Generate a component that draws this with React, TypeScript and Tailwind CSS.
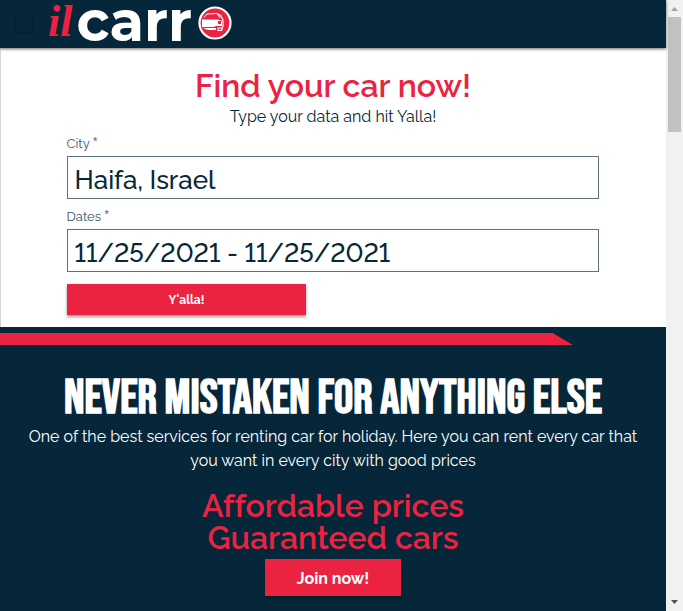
import type { ReactNode } from "react";

function Logo() {
  return (
    <a href="#home" aria-label="ilcarro" className="flex h-12 items-center pb-[2px] text-white">
      <span className="pb-[2px] font-['Liberation_Serif',serif] text-[44px] leading-[40px] font-bold text-[#eb2340] italic">il</span>
      <span className="pb-1 pl-1 font-['Montserrat','DejaVu_Sans',sans-serif] text-[56px] leading-[36px] font-bold">carr</span>
      <svg viewBox="0 0 34 34" className="ml-[6px] size-[34px]" aria-hidden="true">
        <circle cx="17" cy="17" r="15.5" fill="#eb2340" stroke="#fff" strokeWidth="2.2" />
        <path d="M6 11.500 9 8 19 7.500 22 12" fill="none" stroke="#fff" strokeWidth="1" />
        <path d="M4 13.500H20L24 15V20H18L16 21H4Z" fill="#fff" />
        <path d="M5 22H18V24H10Z" fill="#fff" />
        <path d="M19 7.500 22.500 9.500 25 14V20L23.500 24.500H20V22H24" fill="none" stroke="#fff" strokeWidth="1.2" />
        <path d="M20 15V18H23V15Z" fill="#eb2340" />
      </svg>
    </a>
  );
}

function Field({ id, label, value }: { id: string; label: string; value: string }) {
  return (
    <div>
      <label htmlFor={id} className="block h-7 pt-2 text-[13px] leading-4 text-[#3d5566]">
        {label} <sup className="font-['Open_Sans',sans-serif] text-[9px]">*</sup>
      </label>
      <input
        id={id}
        type="text"
        required
        defaultValue={value}
        className="block h-[43px] w-full border border-[#5f717d] bg-white px-[7px] pt-1 text-[26px] leading-8 font-medium text-[#062739] lining-nums outline-none"
      />
    </div>
  );
}

function ActionButton({ children, className }: { children: ReactNode; className: string }) {
  return (
    <button type="button" className={"bg-[#eb2340] text-white shadow-[0_2px_3px_rgba(0,0,0,0.4)] " + className}>
      {children}
    </button>
  );
}

export default function App() {
  return (
    <div className="flex h-screen overflow-hidden bg-white font-[Raleway,Lato,sans-serif] text-[#062739]">
      <div className="flex min-w-0 flex-1 flex-col">
        <header className="relative flex h-12 shrink-0 items-center gap-4 bg-[#062739] px-4 shadow-[0_1px_3px_rgba(0,0,0,0.6)]">
          <button type="button" aria-label="Menu" className="size-4 shadow-[0_1px_2px_rgba(0,0,0,0.35)]" />
          <Logo />
        </header>
        <main className="flex flex-1 flex-col">
          <section className="shrink-0 pt-5 pb-3 shadow-[inset_1px_0_#d5d5d5]">
            <h1 className="text-center text-[32px] leading-9 font-semibold text-[#eb2340]">Find your car now!</h1>
            <p className="pt-px text-center text-base leading-6">Type your data and hit Yalla!</p>
            <form className="mx-auto -mt-px w-4/5">
              <Field id="city" label="City" value="Haifa, Israel" />
              <div className="h-[2px]" />
              <Field id="dates" label="Dates" value="11/25/2021 - 11/25/2021" />
              <ActionButton className="mt-3 block h-[31px] w-[45%] pt-px text-[12px] font-bold">Y'alla!</ActionButton>
            </form>
          </section>
          <section className="flex flex-1 flex-col bg-[#062739] pt-[6px] text-center text-white">
            <div className="h-3 w-[86%] shrink-0 bg-[#eb2340] [clip-path:polygon(0_0,calc(100%-20px)_0,100%_100%,0_100%)]" />
            <h2 className="mt-7 font-['Bebas_Neue','Roboto_Condensed','Roboto',sans-serif] text-[48px] leading-[52px] font-bold whitespace-nowrap">
              NEVER MISTAKEN FOR ANYTHING ELSE
            </h2>
            <p className="px-6 text-base leading-6">
              One of the best services for renting car for holiday. Here you can rent every car that you want in every city with good prices
            </p>
            <p className="mt-4 pt-px text-[32px] leading-8 font-semibold text-[#eb2340] [font-variant-ligatures:none]">
              Affordable prices
              <br />
              Guaranteed cars
            </p>
            <ActionButton className="mx-auto mt-[5px] h-[37px] w-[136px] shrink-0 pt-[2px] text-base font-bold">Join now!</ActionButton>
          </section>
        </main>
      </div>
      <div aria-hidden="true" className="flex w-[17px] shrink-0 flex-col items-center bg-[#f1f1f1]">
        <svg viewBox="0 0 17 17" className="size-[17px]" fill="#a3a3a3">
          <path d="M5 11 8.500 7 12 11Z" />
        </svg>
        <div className="h-[115px] w-[13px] bg-[#c1c1c1]" />
        <svg viewBox="0 0 17 17" className="mt-auto size-[17px]" fill="#505050">
          <path d="M5 6 8.500 10 12 6Z" />
        </svg>
      </div>
    </div>
  );
}
